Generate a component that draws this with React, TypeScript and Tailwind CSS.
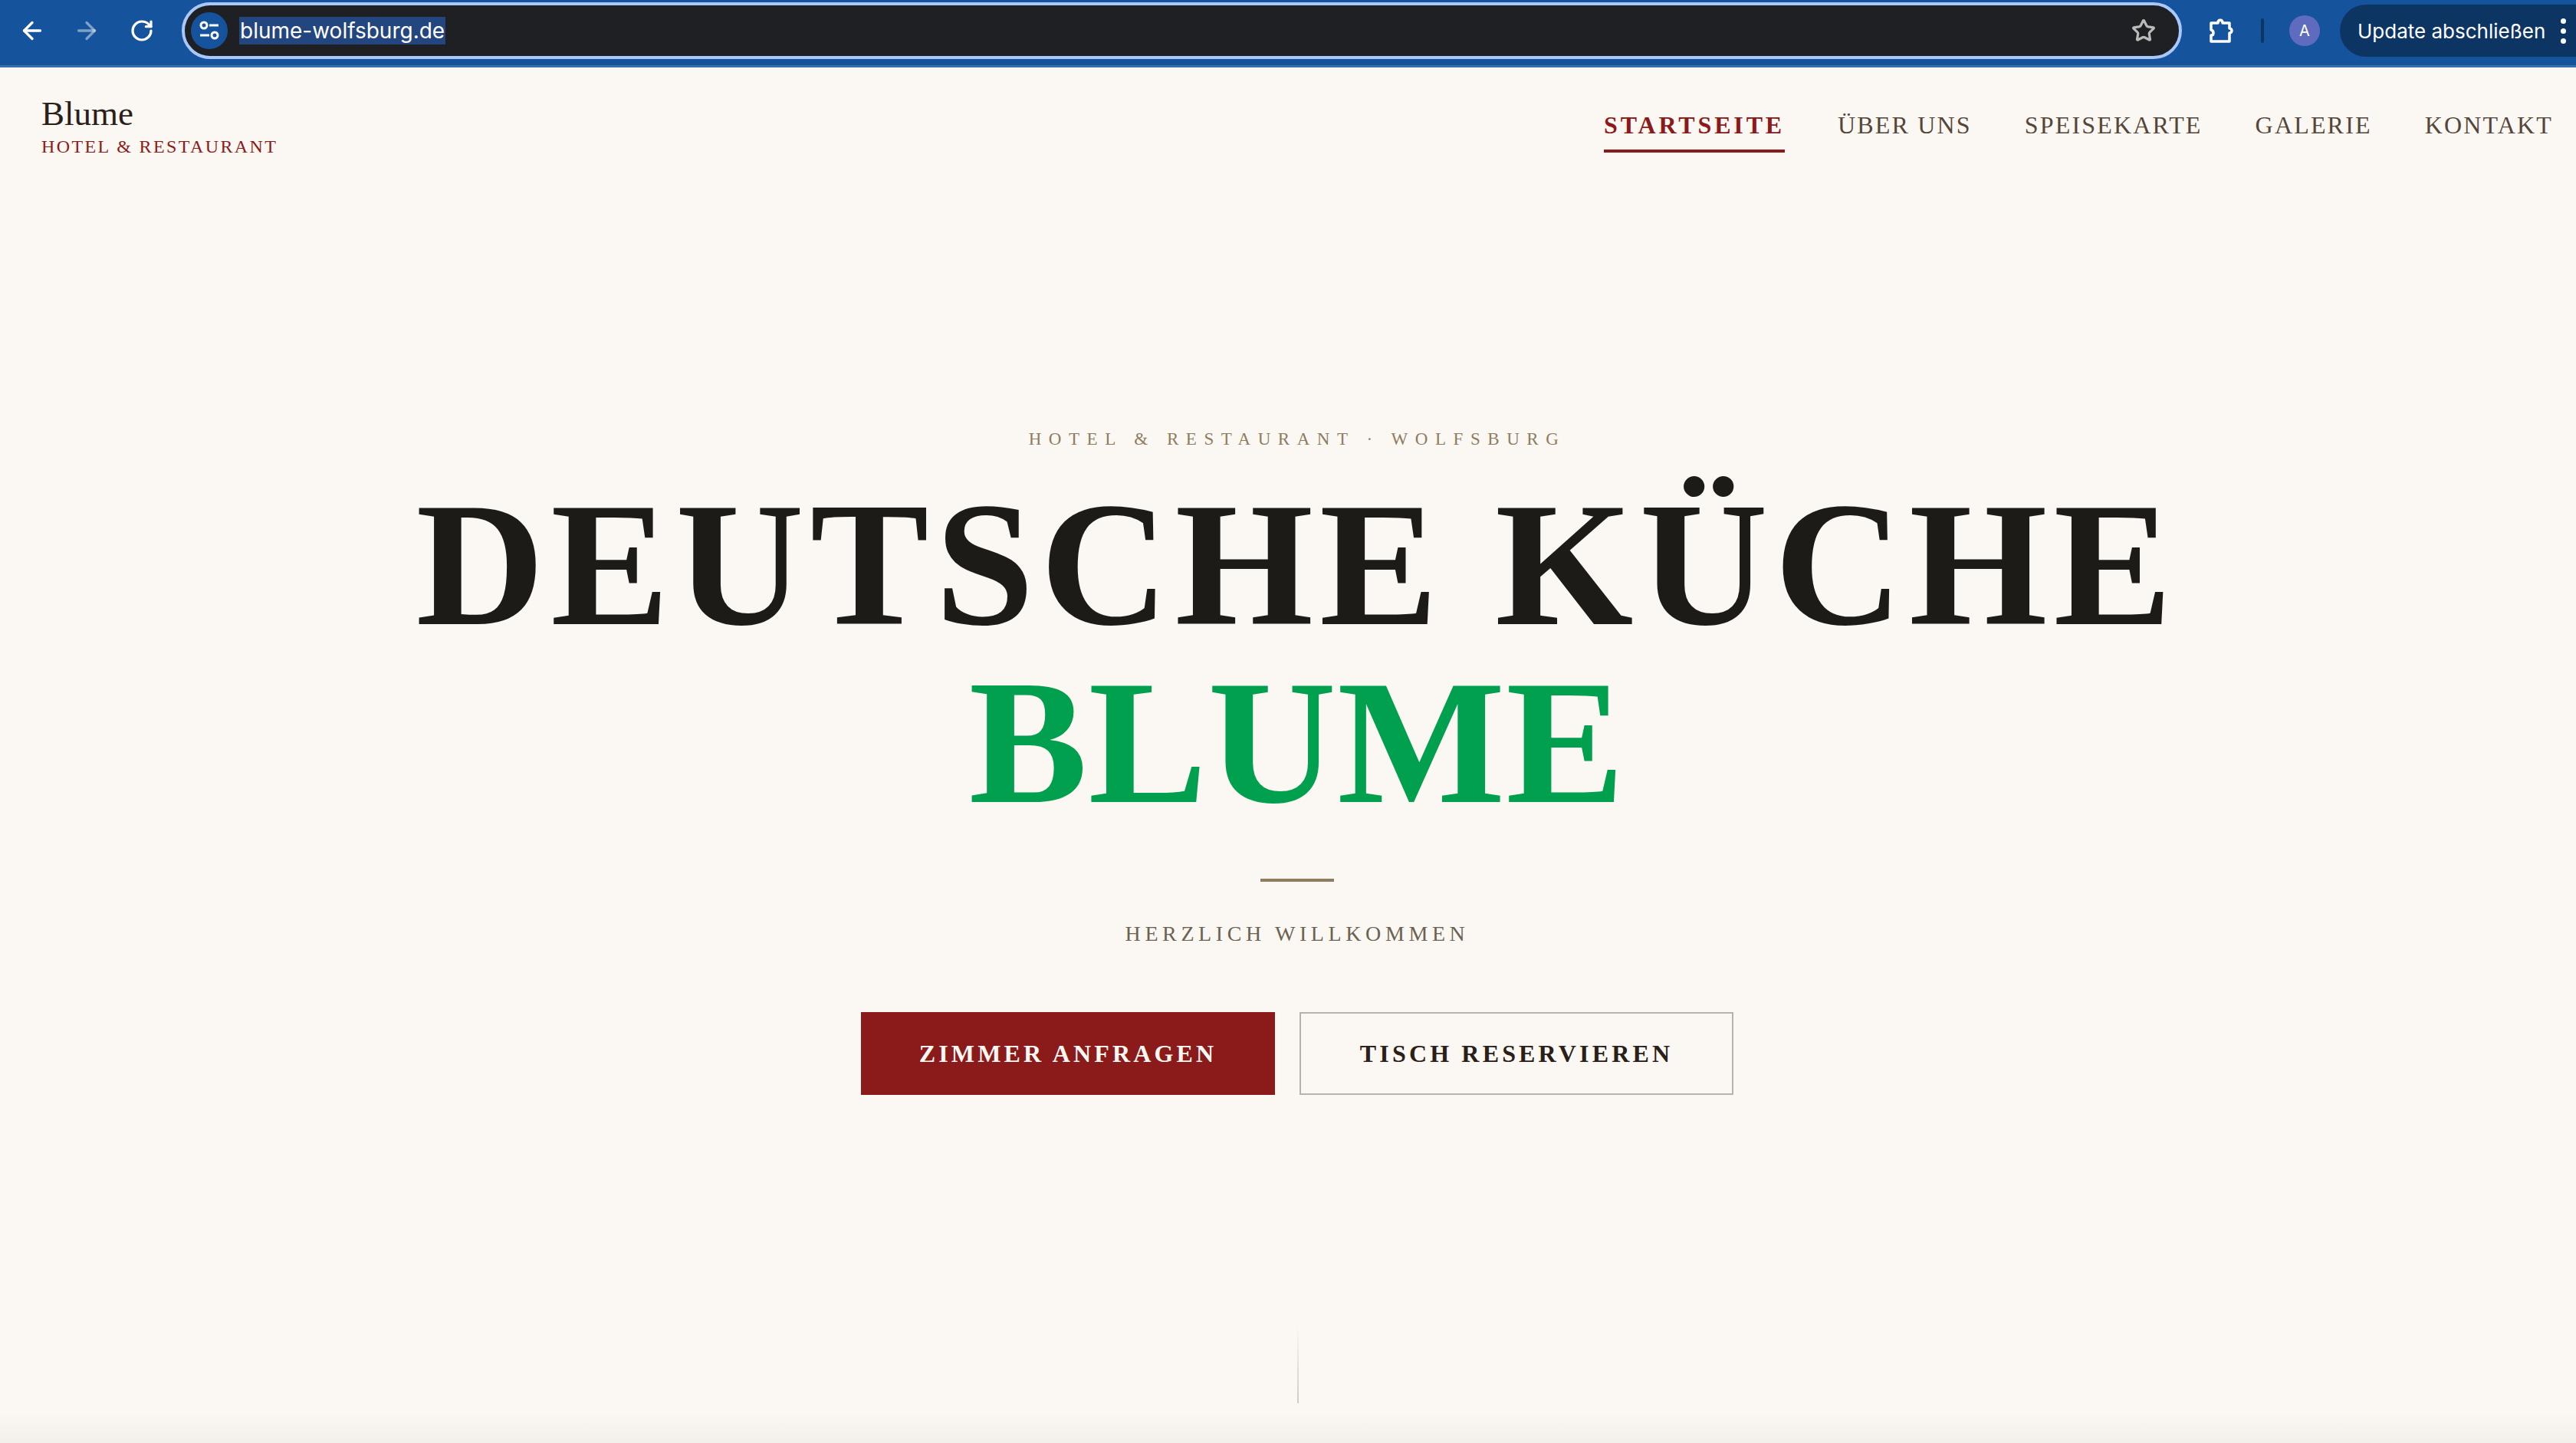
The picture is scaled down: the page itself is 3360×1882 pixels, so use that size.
import { ArrowLeft, ArrowRight, RotateCw, Star } from 'lucide-react';

const serif = 'font-["Liberation_Serif",serif]';

const navLinks = ['ÜBER UNS', 'SPEISEKARTE', 'GALERIE', 'KONTAKT'];

const TuneIcon = () => (
  <svg width="30" height="30" viewBox="0 0 30 30" fill="none" stroke="white" strokeWidth="3">
    <circle cx="8" cy="8" r="4" />
    <path d="M15 8h12" />
    <path d="M3 21h12" />
    <circle cx="22" cy="21" r="4" />
  </svg>
);

const PuzzleIcon = () => (
  <svg width="34" height="32" viewBox="0 0 34 32" fill="none" stroke="white" strokeWidth="3.5" strokeLinejoin="round">
    <path d="M3 6h9c0-5 6-5 6 0h9v7c4 0 4 6 0 6v11H3v-8c4 0 4-6 0-7z" />
  </svg>
);

const BrowserBar = () => (
  <div className="flex h-[88px] shrink-0 items-center border-b-[3px] border-[#3a6ea8] bg-[#15549c] pb-[5px] font-['Inter',sans-serif] text-white">
    <div className="flex w-[237px] shrink-0 items-center pl-[24px]">
      <ArrowLeft size={36} strokeWidth={2.2} />
      <ArrowRight size={36} strokeWidth={2.2} className="ml-[35px] text-white/45" />
      <RotateCw size={32} strokeWidth={2.4} className="ml-[38px]" />
    </div>
    <div className="flex h-[74px] w-[2609px] shrink-0 items-center rounded-full border-[4px] border-[#a8c7fa] bg-[#1f2023] pl-[8px] pr-[30px]">
      <div className="flex h-[48px] w-[48px] shrink-0 items-center justify-center rounded-full bg-[#15549c]">
        <TuneIcon />
      </div>
      <span className="ml-[15px] bg-[#24467f] px-[1px] text-[28px] leading-[36px]">blume-wolfsburg.de</span>
      <Star size={32} strokeWidth={2.4} className="ml-auto text-[#b8bbb9]" />
    </div>
    <div className="ml-[35px]">
      <PuzzleIcon />
    </div>
    <div className="ml-[34px] h-[32px] w-[4px] rounded-full bg-[#0d3563]" />
    <div className="ml-[33px] flex h-[40px] w-[40px] items-center justify-center rounded-full bg-[#5f6bbf] text-[20px]">A</div>
    <div className="ml-[26px] flex h-[68px] min-w-0 flex-1 items-center rounded-l-full bg-[#0d3563] pl-[23px]">
      <span className="whitespace-nowrap text-[26px]">Update abschließen</span>
      <div className="ml-[20px] flex flex-col gap-[6px]">
        <span className="h-[7px] w-[7px] rounded-full bg-white" />
        <span className="h-[7px] w-[7px] rounded-full bg-white" />
        <span className="h-[7px] w-[7px] rounded-full bg-white" />
      </div>
    </div>
  </div>
);

const SiteHeader = () => (
  <header className={`flex items-start justify-between pl-[54px] pr-[30px] pt-[34px] ${serif}`}>
    <div>
      <div className="text-[45px] leading-[52px] text-[#2a2018]">Blume</div>
      <div className="mt-[2px] text-[24px] leading-[30px] tracking-[0.1em] text-[#8b1a1a]">HOTEL &amp; RESTAURANT</div>
    </div>
    <nav className="flex gap-[69px] pt-[21px] text-[32px] leading-[40px] tracking-[0.068em] text-[#55463a]">
      <a className="border-b-[4px] border-[#8b1a1a] pb-[12px] font-bold tracking-[0.12em] text-[#8b1a1a]">STARTSEITE</a>
      {navLinks.map(link => (
        <a key={link}>{link}</a>
      ))}
    </nav>
  </header>
);

const Hero = () => (
  <section className={`flex flex-col items-center pl-[24px] pt-[352px] text-center ${serif}`}>
    <p className="text-[23px] leading-[30px] tracking-[0.415em] text-[#8e7c5f]">HOTEL &amp; RESTAURANT · WOLFSBURG</p>
    <h1 className="mt-[32px] text-[232px] font-bold leading-[232px] tracking-[0.035em] text-[#1c1b17]">
      DEUTSCHE KÜCHE
      <br />
      <span className="tracking-[0.005em] text-[#00a04e]">BLUME</span>
    </h1>
    <div className="mt-[62px] h-[4px] w-[96px] bg-[#8e7c5f]" />
    <p className="mt-[50px] text-[28px] leading-[36px] tracking-[0.2em] text-[#6b6252]">HERZLICH WILLKOMMEN</p>
    <div className="mt-[84px] flex gap-[32px]">
      <button className="flex h-[108px] w-[540px] items-center justify-center bg-[#8b1a1a] text-[32px] font-bold tracking-[0.13em] text-[#fbf8f3]">
        ZIMMER ANFRAGEN
      </button>
      <button className="flex h-[108px] w-[566px] items-center justify-center border-2 border-[#b8b3aa] text-[32px] font-bold tracking-[0.13em] text-[#2a2018]">
        TISCH RESERVIEREN
      </button>
    </div>
  </section>
);

export default function App() {
  return (
    <div className="relative h-[1882px] overflow-hidden bg-[#fbf8f3]">
      <BrowserBar />
      <SiteHeader />
      <Hero />
      {/* scroll hint + window shadow at the bottom */}
      <div className="absolute left-[1692px] top-[1728px] h-[102px] w-[2px] bg-gradient-to-b from-transparent to-[#cfccc4]" />
      <div className="absolute inset-x-0 bottom-0 h-[40px] bg-gradient-to-b from-transparent to-[#f3f0eb]" />
    </div>
  );
}
